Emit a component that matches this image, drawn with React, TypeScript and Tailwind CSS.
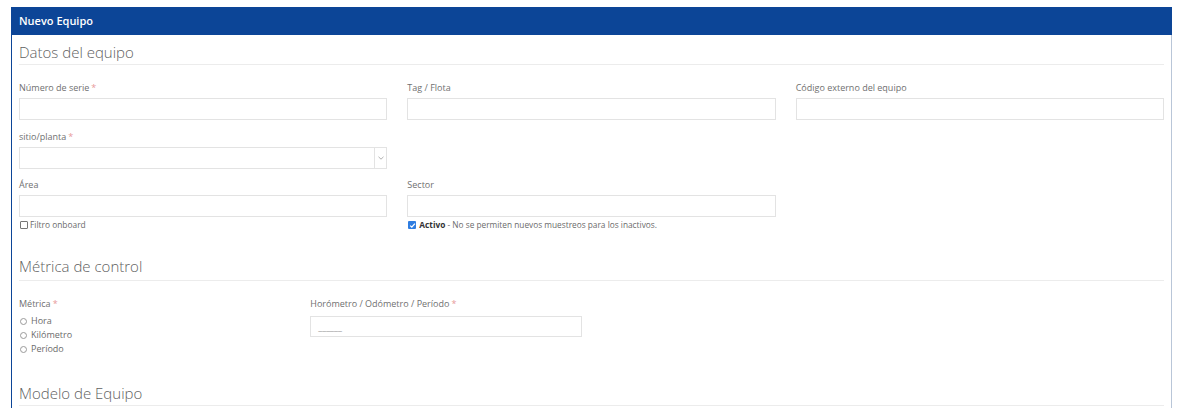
import React from "react";

const font = { fontFamily: '"Open Sans", "Liberation Sans", sans-serif' };

function Label({ text, required }: { text: string; required?: boolean }) {
  return (
    <div className="text-[9px] leading-[12px] text-[#707070]">
      {text}
      {required && <span className="ml-[2px] text-[#e79a9a]">*</span>}
    </div>
  );
}

function Input({ className = "" }: { className?: string }) {
  return <div className={`h-[22px] border border-[#e3e3e3] bg-white ${className}`} />;
}

function SectionTitle({ title, className = "" }: { title: string; className?: string }) {
  return (
    <div className={`border-b border-[#ececec] pb-[2px] ${className}`}>
      <h2 className="text-[15px] font-light leading-[20px] text-[#5f5f5f]">{title}</h2>
    </div>
  );
}

function Radio({ label }: { label: string }) {
  return (
    <div className="flex items-center gap-[4px] text-[9px] leading-[14px] text-[#6b6b6b]">
      <span className="ml-[1px] h-[7px] w-[7px] rounded-full border border-[#9a9a9a] bg-white" />
      {label}
    </div>
  );
}

export default function App() {
  return (
    <div className="min-h-[417px] bg-white" style={font}>
      <div className="ml-[11px] mr-[8px] pt-[7px]">
        <div className="flex h-[28px] items-center bg-[#0c4597] px-[8px]">
          <span className="text-[11px] font-semibold text-white">Nuevo Equipo</span>
        </div>
        <div className="h-[373px] overflow-hidden border-l border-r border-l-[#0c4597] border-r-[#b9c6d8] px-[7px] pt-[7px]">
          <SectionTitle title="Datos del equipo" />

          <div className="mt-[17px] grid grid-cols-3 gap-x-[20px]">
            <div>
              <Label text="Número de serie" required />
              <Input className="mt-[4px]" />
            </div>
            <div>
              <Label text="Tag / Flota" />
              <Input className="mt-[4px]" />
            </div>
            <div>
              <Label text="Código externo del equipo" />
              <Input className="mt-[4px]" />
            </div>
          </div>

          <div className="mt-[11px] grid grid-cols-3 gap-x-[20px]">
            <div>
              <Label text="sitio/planta" required />
              <div className="mt-[4px] flex h-[22px] border border-[#e3e3e3] bg-white">
                <div className="flex-1" />
                <div className="flex w-[12px] items-center justify-center border-l border-[#e3e3e3]">
                  <svg width="6" height="4" viewBox="0 0 6 4" fill="none">
                    <path d="M0.5 0.8 L3 3.2 L5.5 0.8" stroke="#9a9a9a" strokeWidth="0.8" />
                  </svg>
                </div>
              </div>
            </div>
          </div>

          <div className="mt-[10px] grid grid-cols-3 gap-x-[20px]">
            <div>
              <Label text="Área" />
              <Input className="mt-[4px]" />
              <div className="mt-[2px] flex items-center gap-[2px] text-[8.4px] leading-[12px] text-[#6b6b6b]">
                <span className="ml-[1px] h-[8px] w-[8px] rounded-[1px] border border-[#777] bg-white" />
                Filtro onboard
              </div>
            </div>
            <div>
              <Label text="Sector" />
              <Input className="mt-[4px]" />
              <div className="mt-[2px] flex items-center gap-[3px] text-[8.3px] leading-[12px] text-[#6b6b6b]">
                <span className="ml-[1px] flex h-[8px] w-[8px] items-center justify-center rounded-[1px] bg-[#2f7de1]">
                  <svg width="7" height="7" viewBox="0 0 7 7" fill="none">
                    <path d="M1.2 3.6 L2.8 5.1 L5.9 1.6" stroke="white" strokeWidth="1.3" />
                  </svg>
                </span>
                <span>
                  <span className="font-bold text-[#333]">Activo</span> - No se permiten nuevos muestreos para los inactivos.
                </span>
              </div>
            </div>
          </div>

          <SectionTitle title="Métrica de control" className="mt-[25px] pb-[4px]" />

          <div className="mt-[17px] grid grid-cols-4 gap-x-[20px]">
            <div>
              <Label text="Métrica" required />
              <div className="mt-[4px]">
                <Radio label="Hora" />
                <Radio label="Kilómetro" />
                <Radio label="Período" />
              </div>
            </div>
            <div>
              <Label text="Horómetro / Odómetro / Período" required />
              <div className="mt-[6px] flex h-[21px] items-center border border-[#e3e3e3] bg-white px-[7px]">
                <span className="text-[9px] leading-[12px] text-[#9a9a9a]">______</span>
              </div>
            </div>
          </div>

          <SectionTitle title="Modelo de Equipo" className="mt-[27px]" />
        </div>
      </div>
    </div>
  );
}
